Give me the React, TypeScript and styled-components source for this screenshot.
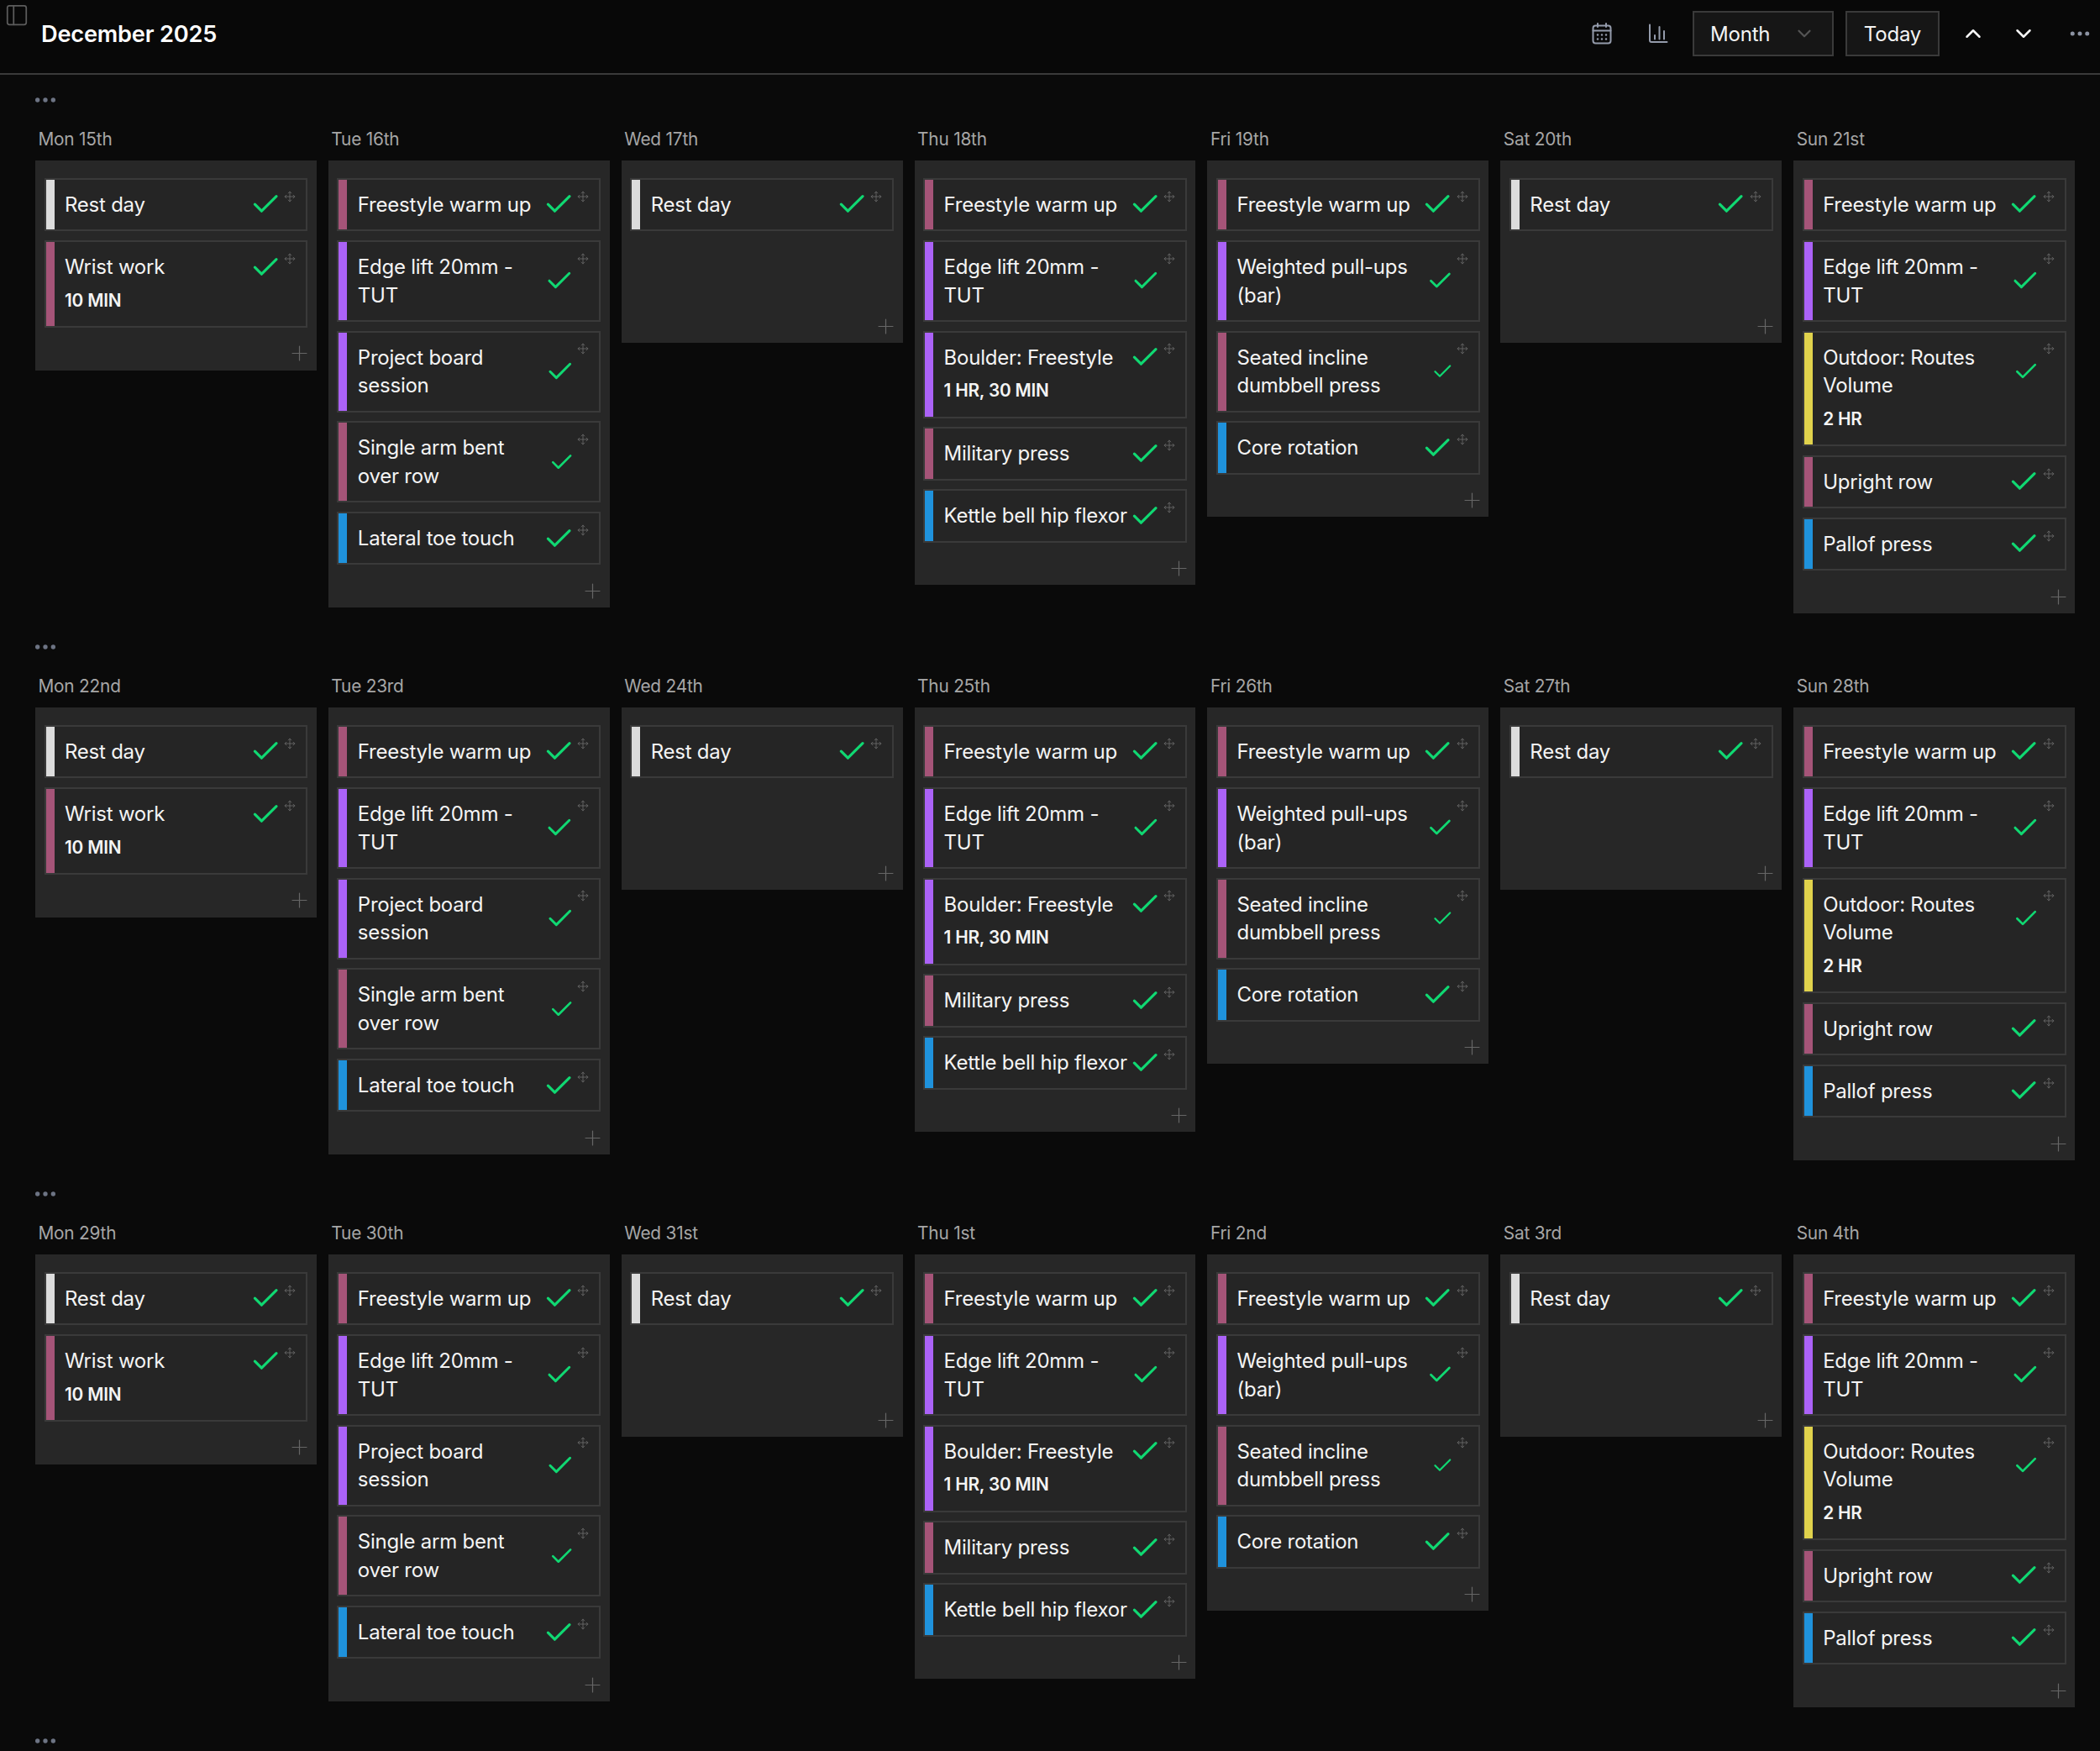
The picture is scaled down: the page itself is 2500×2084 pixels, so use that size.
import { FC } from "react";
import styled, { createGlobalStyle } from "styled-components";
import { Check, ChevronDown, ChevronUp, Ellipsis, Move, PanelLeft, Plus } from "lucide-react";

const GlobalStyle = createGlobalStyle`
	* { box-sizing: border-box; }
	html, body { margin: 0; background: #0a0a0a; }
	body { font-family: Inter, "Noto Sans", sans-serif; color: #f4f4f4; }
`;

const colors = {
	white: "#dcdcdc",
	maroon: "#a55478",
	purple: "#ab62f7",
	blue: "#1f92dc",
	yellow: "#e0d24c",
};

type Tone = keyof typeof colors;

interface Workout {
	title: string;
	tone: Tone;
	sub?: string;
}

const rest: Workout = { title: "Rest day", tone: "white" };
const warmUp: Workout = { title: "Freestyle warm up", tone: "maroon" };
const edgeLift: Workout = { title: "Edge lift 20mm - TUT", tone: "purple" };

const week: Workout[][] = [
	[rest, { title: "Wrist work", tone: "maroon", sub: "10 MIN" }],
	[
		warmUp,
		edgeLift,
		{ title: "Project board session", tone: "purple" },
		{ title: "Single arm bent over row", tone: "maroon" },
		{ title: "Lateral toe touch", tone: "blue" },
	],
	[rest],
	[
		warmUp,
		edgeLift,
		{ title: "Boulder: Freestyle", tone: "purple", sub: "1 HR, 30 MIN" },
		{ title: "Military press", tone: "maroon" },
		{ title: "Kettle bell hip flexor", tone: "blue" },
	],
	[
		warmUp,
		{ title: "Weighted pull-ups (bar)", tone: "purple" },
		{ title: "Seated incline dumbbell press", tone: "maroon" },
		{ title: "Core rotation", tone: "blue" },
	],
	[rest],
	[
		warmUp,
		edgeLift,
		{ title: "Outdoor: Routes Volume", tone: "yellow", sub: "2 HR" },
		{ title: "Upright row", tone: "maroon" },
		{ title: "Pallof press", tone: "blue" },
	],
];

const months = [
	["Mon 15th", "Tue 16th", "Wed 17th", "Thu 18th", "Fri 19th", "Sat 20th", "Sun 21st"],
	["Mon 22nd", "Tue 23rd", "Wed 24th", "Thu 25th", "Fri 26th", "Sat 27th", "Sun 28th"],
	["Mon 29th", "Tue 30th", "Wed 31st", "Thu 1st", "Fri 2nd", "Sat 3rd", "Sun 4th"],
];

const Page = styled.div`
	position: relative;
	width: 2500px;
	height: 2084px;
	overflow: hidden;
	background: #0a0a0a;
`;

const SidebarToggle = styled(PanelLeft)`
	position: absolute;
	top: 2.5px;
	left: 4.5px;
	color: #5c5c5c;
`;

const Header = styled.header`
	display: flex;
	align-items: center;
	justify-content: space-between;
	height: 89px;
	padding: 0 9px 7px 49px;
	background: #080808;
	border-bottom: 2px solid #3a3a3a;
`;

const Title = styled.h1`
	margin: 0;
	font-size: 27.2px;
	font-weight: 600;
	letter-spacing: -0.2px;
	color: #fff;
`;

const Toolbar = styled.div`
	display: flex;
	align-items: center;
`;

const ToolIcon = styled.span`
	display: flex;
	align-items: center;
	justify-content: center;
	width: 32px;
	margin-left: 35px;
	color: #949bab;
`;

const ToolButton = styled.div<{ $wide?: boolean }>`
	display: flex;
	align-items: center;
	justify-content: ${({ $wide }) => ($wide ? "space-between" : "center")};
	width: ${({ $wide }) => ($wide ? "168px" : "112px")};
	height: 54px;
	margin-left: ${({ $wide }) => ($wide ? "25px" : "14px")};
	padding: ${({ $wide }) => ($wide ? "0 20px 0 19px" : "0")};
	background: #161616;
	border: 2px solid #3a3a3a;
	font-size: 24px;
	letter-spacing: -0.2px;
	color: #f4f4f4;
`;

const Arrow = styled.span<{ $lead?: boolean }>`
	display: flex;
	justify-content: center;
	width: 30px;
	margin: 0 19px 0 ${({ $lead }) => ($lead ? "25px" : "11px")};
	color: #f4f4f4;
`;

const MoreDots = styled(Ellipsis)`
	margin-left: 18px;
	color: #8c93a3;
`;

const Weeks = styled.main`
	padding: 20px 30px 0 42px;
`;

const WeekRow = styled.section`
	margin-bottom: 30px;
	height: 621px;
`;

const WeekDots = styled.div`
	display: flex;
	align-items: center;
	height: 20px;
	margin: 0 0 22px -4px;
	color: #6d7484;
`;

const Days = styled.div`
	display: grid;
	grid-template-columns: repeat(7, minmax(0, 1fr));
	gap: 14px;
	align-items: start;
`;

const DayLabel = styled.div`
	height: 30px;
	margin: 0 0 10px 3.5px;
	font-size: 20.8px;
	letter-spacing: -0.2px;
	line-height: 30px;
	color: #a6a6a6;
`;

const DayPanel = styled.div`
	display: flex;
	flex-direction: column;
	gap: 10.7px;
	min-height: 217px;
	padding: 21px 10.5px 0;
	background: #272727;
`;

const PanelFooter = styled.div`
	display: flex;
	justify-content: flex-end;
	align-items: center;
	height: 40px;
	margin: auto -5px 0 0;
	color: #666;
`;

const Card = styled.div`
	position: relative;
	display: flex;
	background: #252525;
	border: 2px solid #3a3a3a;
`;

const Bar = styled.div<{ $tone: Tone }>`
	flex: none;
	width: 10px;
	background: ${({ $tone }) => colors[$tone]};
`;

const CardBody = styled.div`
	flex: 1;
	min-width: 0;
	padding: 12.9px 29px 12.9px 12.5px;
`;

const CardRow = styled.div`
	display: flex;
	align-items: center;
	justify-content: space-between;
`;

const CardTitle = styled.div`
	font-size: 24px;
	letter-spacing: -0.24px;
	line-height: 33.6px;
	color: #f4f4f4;
`;

const DoneCheck = styled(Check)`
	min-width: 0;
	margin: -3px 0;
	color: #10d872;
`;

const CardSub = styled.div`
	margin: 8px 0 3.5px;
	font-size: 20.8px;
	font-weight: 600;
	letter-spacing: -0.2px;
	line-height: 29px;
	color: #f4f4f4;
`;

const DragHandle = styled(Move)`
	position: absolute;
	top: 12.7px;
	right: 12px;
	color: #6a6a6a;
`;

const WorkoutCard: FC<{ workout: Workout }> = ({ workout }) => (
	<Card>
		<Bar $tone={workout.tone} />
		<CardBody>
			<CardRow>
				<CardTitle>{workout.title}</CardTitle>
				<DoneCheck size={38.4} strokeWidth={2} />
			</CardRow>
			{workout.sub && <CardSub>{workout.sub}</CardSub>}
		</CardBody>
		<DragHandle size={14} strokeWidth={1.5} />
	</Card>
);

const CalendarIcon: FC = () => (
	<svg width="24" height="26" viewBox="0 0 24 26" fill="none" stroke="currentColor" strokeWidth="2" strokeLinecap="round">
		<rect x="1.5" y="3.5" width="21" height="21" rx="3" />
		<path d="M7 1v4M17 1v4M1.5 9.5h21" />
		<g fill="currentColor" stroke="none">
			<circle cx="7" cy="14.5" r="1.2" />
			<circle cx="12" cy="14.5" r="1.2" />
			<circle cx="17" cy="14.5" r="1.2" />
			<circle cx="7" cy="19.5" r="1.2" />
			<circle cx="12" cy="19.5" r="1.2" />
			<circle cx="17" cy="19.5" r="1.2" />
		</g>
	</svg>
);

const BarsIcon: FC = () => (
	<svg width="24" height="24" viewBox="0 0 24 24" fill="none" stroke="currentColor" strokeWidth="2" strokeLinecap="round">
		<path d="M2 1.5V20a2 2 0 0 0 2 2h18.5" />
		<path d="M8 18.5V14" />
		<path d="M13.5 18.5V4" />
		<path d="M19 18.5V9" />
	</svg>
);

const App: FC = () => (
	<Page>
		<GlobalStyle />
		<Header>
			<Title>December 2025</Title>
			<Toolbar>
				<ToolIcon>
					<CalendarIcon />
				</ToolIcon>
				<ToolIcon>
					<BarsIcon />
				</ToolIcon>
				<ToolButton $wide>
					Month
					<ChevronDown size={26} color="#555" />
				</ToolButton>
				<ToolButton>Today</ToolButton>
				<Arrow $lead>
					<ChevronUp size={30} />
				</Arrow>
				<Arrow>
					<ChevronDown size={30} />
				</Arrow>
				<MoreDots size={30} />
			</Toolbar>
		</Header>
		<SidebarToggle size={30} strokeWidth={1.4} />
		<Weeks>
			{months.map((labels) => (
				<WeekRow key={labels[0]}>
					<WeekDots>
						<Ellipsis size={32} />
					</WeekDots>
					<Days>
						{labels.map((label, i) => (
							<div key={label}>
								<DayLabel>{label}</DayLabel>
								<DayPanel>
									{week[i].map((workout) => (
										<WorkoutCard key={workout.title} workout={workout} />
									))}
									<PanelFooter>
										<Plus size={29} strokeWidth={1} />
									</PanelFooter>
								</DayPanel>
							</div>
						))}
					</Days>
				</WeekRow>
			))}
			<WeekDots>
				<Ellipsis size={32} />
			</WeekDots>
		</Weeks>
	</Page>
);

export default App;
